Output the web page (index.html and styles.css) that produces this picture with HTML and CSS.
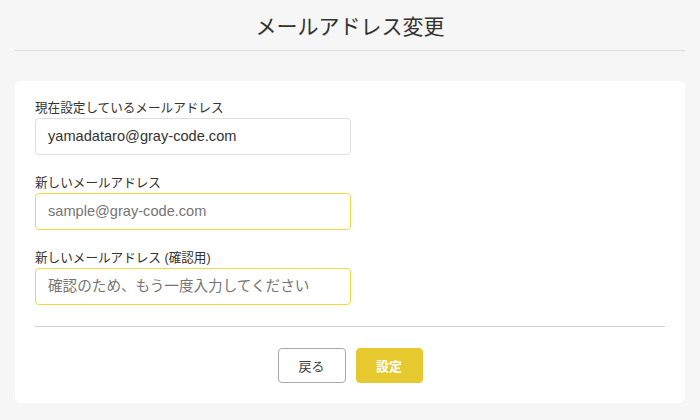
FILE: index.html
```html
<!DOCTYPE html>
<html lang="ja">
<head>
<meta charset="utf-8">
<title>メールアドレス変更</title>
<link rel="stylesheet" href="styles.css">
</head>
<body>
<header class="page-header">
  <h1 class="page-title">メールアドレス変更</h1>
</header>
<main class="card">
  <div class="field">
    <label class="field-label">現在設定しているメールアドレス</label>
    <div class="input input-current">yamadataro@gray-code.com</div>
  </div>
  <div class="field">
    <label class="field-label">新しいメールアドレス</label>
    <div class="input input-active">sample@gray-code.com</div>
  </div>
  <div class="field field-last">
    <label class="field-label">新しいメールアドレス (確認用)</label>
    <div class="input input-active">確認のため、もう一度入力してください</div>
  </div>
  <hr class="divider">
  <div class="actions">
    <button class="btn btn-back">戻る</button>
    <button class="btn btn-submit">設定</button>
  </div>
</main>
</body>
</html>
```

FILE: styles.css
```css
* { box-sizing: border-box; }
html, body {
  margin: 0;
  padding: 0;
  background: #f6f6f6;
  font-family: "Liberation Sans", "Noto Sans CJK JP", sans-serif;
  color: #333;
}
.page-header {
  margin: 0 15px;
  height: 51px;
  border-bottom: 1px solid #dcdcdc;
  display: flex;
  align-items: center;
  justify-content: center;
}
.page-title {
  margin: 0;
  font-size: 21px;
  font-weight: normal;
  color: #333;
  line-height: 30px;
  font-family: "Noto Sans CJK JP", sans-serif;
}
.card {
  margin: 30px 15px 0;
  background: #fff;
  border-radius: 5px;
  padding: 17px 20px 20px;
}
.field { margin-bottom: 18px; }
.field-last { margin-bottom: 21px; }
.field-label {
  display: block;
  font-size: 12.6px;
  line-height: 20px;
  color: #333;
}
.input {
  width: 316px;
  height: 37px;
  border: 1px solid #dedede;
  border-radius: 4px;
  padding: 0 12px;
  font-size: 14.6px;
  line-height: 35px;
  color: #333;
}
.input-active {
  border-color: #efd940;
  color: #757575;
}
.divider {
  border: 0;
  border-top: 1px solid #cfcfcf;
  margin: 0 0 21px;
}
.actions {
  display: flex;
  justify-content: center;
  gap: 10px;
}
.btn {
  width: 68px;
  height: 35px;
  border-radius: 4px;
  font-size: 13px;
  font-family: "Noto Sans CJK JP", sans-serif;
  cursor: pointer;
}
.btn-back {
  background: #fff;
  border: 1px solid #a9a9a9;
  color: #444;
}
.btn-submit {
  width: 67px;
  background: #e6c92e;
  border: 1px solid #e6c92e;
  color: #fff;
  font-weight: bold;
}
```
